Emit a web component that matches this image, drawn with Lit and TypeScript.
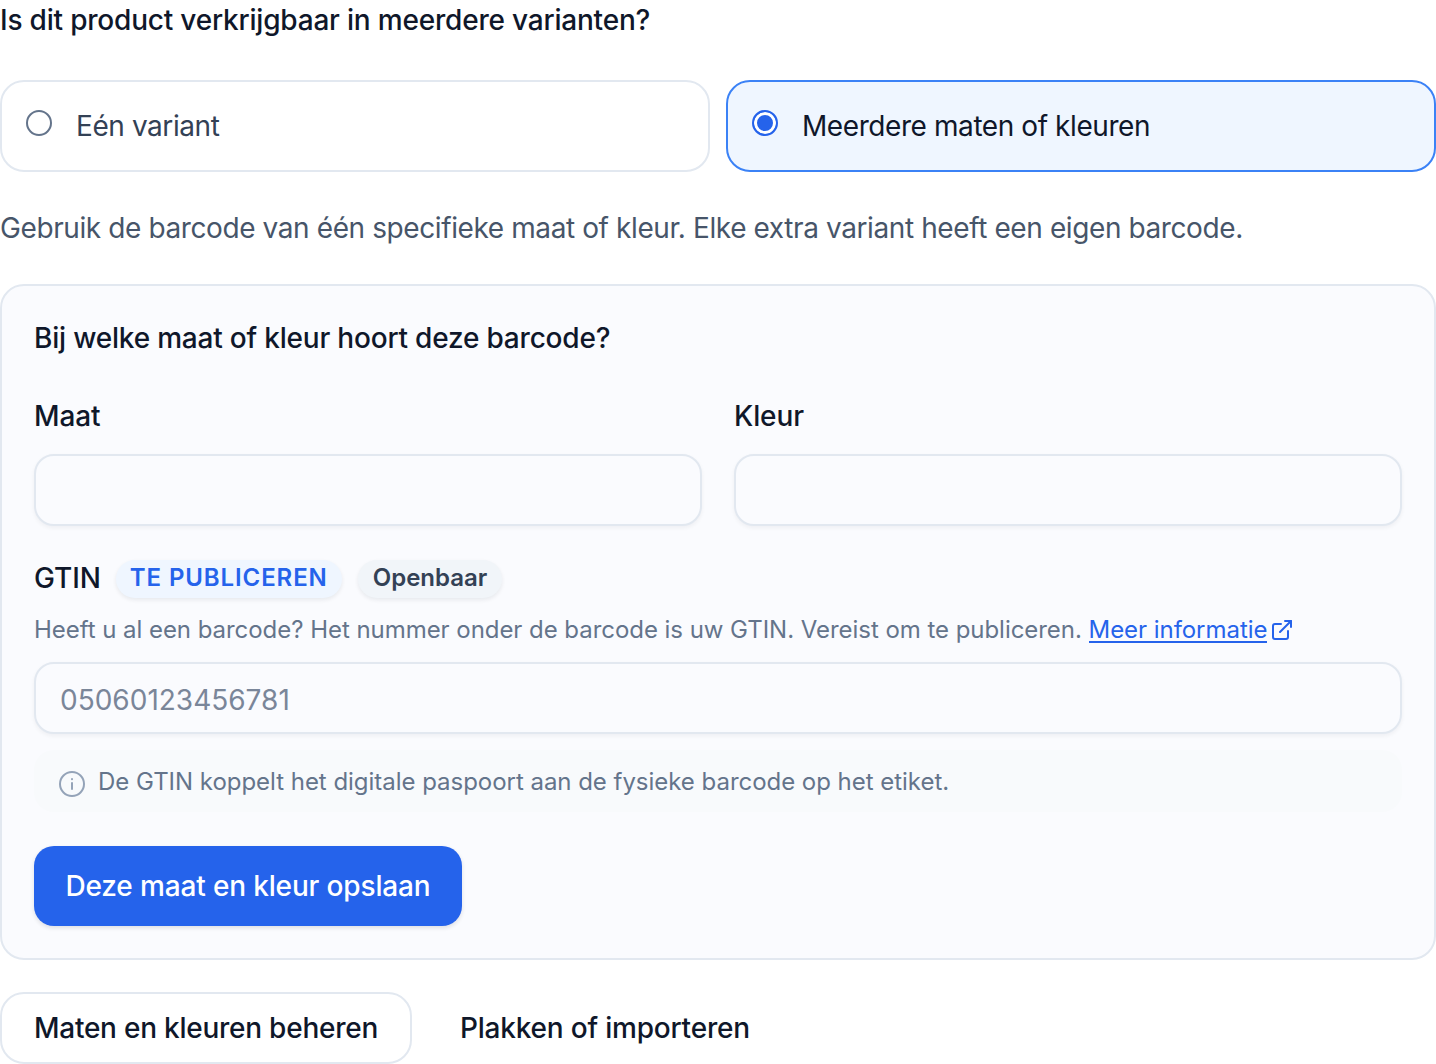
import { LitElement, html, css } from "lit";
import { customElement } from "lit/decorators.js";

@customElement("app-root")
export class AppRoot extends LitElement {
  static styles = css`
    :host { display: block; width: 1436px; height: 1064px; overflow: hidden; background: #fff; font-family: Inter, "Liberation Sans", sans-serif; color: #0f172a; font-size: 28px; line-height: 40px; }
    * { box-sizing: border-box; }
    .q { margin: 0; height: 40px; font-weight: 500; font-size: 28px; letter-spacing: -0.2px; }
    .options { display: grid; grid-template-columns: 1fr 1fr; gap: 16px; margin-top: 40px; }
    .opt { height: 92px; border: 2px solid #e2e8f0; border-radius: 24px; background: #fff; display: flex; padding: 24px 24px 0; gap: 24px; color: #334155; letter-spacing: -0.42px; }
    .opt.on { border-color: #3b82f6; background: #eff6ff; color: #0f172a; }
    .radio { flex: none; width: 26px; height: 26px; margin-top: 4px; border-radius: 50%; border: 2px solid #64748b; background: #fff; }
    .on .radio { border: 2px solid #2563eb; background: #2563eb; box-shadow: inset 0 0 0 3px #fff; }
    .desc { margin: 36px 0 0; color: #475569; height: 40px; letter-spacing: -0.4px; }
    .panel { margin-top: 36px; height: 676px; border: 2px solid #e2e8f0; border-radius: 24px; background: #fafbfe; padding: 32px; }
    .ptitle { font-weight: 500; height: 40px; margin: 0; letter-spacing: -0.2px; }
    .cols { display: grid; grid-template-columns: 1fr 1fr; gap: 32px; margin-top: 38px; }
    .label { font-weight: 500; height: 40px; letter-spacing: -0.1px; }
    .input { height: 72px; border: 2px solid #e2e8f0; border-radius: 20px; background: #fafbfe; box-shadow: 0 2px 4px rgba(15,23,42,.05); margin-top: 18px; }
    .gtin { display: flex; align-items: center; gap: 14px; height: 40px; margin-top: 32px; }
    .badge { font-size: 24px; font-weight: 600; line-height: 35px; height: 38px; margin-top: 2px; border-radius: 19px; box-shadow: 0 2px 4px rgba(15,23,42,.08); }
    .badge.blue { background: #eff6ff; color: #2563eb; letter-spacing: 0.9px; margin-left: 1px; padding: 0 14px; }
    .badge.gray { background: #f1f5f9; color: #334155; padding: 0 15px; margin-left: 2px; }
    .help { font-size: 24px; line-height: 32px; height: 32px; margin-top: 16px; color: #64748b; display: flex; align-items: flex-start; white-space: pre; letter-spacing: -0.045px; }
    .help a { color: #2563eb; text-decoration: none; border-bottom: 2px solid #2563eb; height: 29px; }
    .help svg { margin: 6px 0 0 5px; }
    .gtininput { margin-top: 16px; padding: 4px 24px 0; color: #7a8699; display: flex; align-items: center; }
    .info { display: flex; align-items: center; gap: 13px; height: 62px; margin-top: 16px; border-radius: 20px; background: #f8fafc; padding: 2px 25px 0; font-size: 24px; color: #64748b; letter-spacing: -0.03px; }
    .info svg { margin-top: 4px; }
    .save { display: block; margin-top: 34px; width: 428px; height: 80px; border: 0; border-radius: 20px; background: #2563eb; color: #fff; font: 500 28px Inter, "Liberation Sans", sans-serif; letter-spacing: -0.15px; box-shadow: 0 2px 4px rgba(15,23,42,.12); padding: 0; }
    .actions { display: flex; align-items: center; margin-top: 32px; gap: 48px; }
    .btn { height: 72px; width: 412px; border: 2px solid #e2e8f0; border-radius: 24px; background: #fff; font-weight: 500; display: flex; align-items: center; justify-content: center; letter-spacing: -0.24px; }
    .link { font-weight: 500; letter-spacing: -0.2px; }
  `;

  render() {
    return html`
      <p class="q">Is dit product verkrijgbaar in meerdere varianten?</p>
      <div class="options">
        <div class="opt"><div class="radio"></div><span>Eén variant</span></div>
        <div class="opt on"><div class="radio"></div><span>Meerdere maten of kleuren</span></div>
      </div>
      <p class="desc">Gebruik de barcode van één specifieke maat of kleur. Elke extra variant heeft een eigen barcode.</p>
      <div class="panel">
        <p class="ptitle">Bij welke maat of kleur hoort deze barcode?</p>
        <div class="cols">
          <div><div class="label">Maat</div><div class="input"></div></div>
          <div><div class="label">Kleur</div><div class="input"></div></div>
        </div>
        <div class="gtin">
          <span class="label">GTIN</span>
          <span class="badge blue">TE PUBLICEREN</span>
          <span class="badge gray">Openbaar</span>
        </div>
        <div class="help">Heeft u al een barcode? Het nummer onder de barcode is uw GTIN. Vereist om te publiceren. <a>Meer informatie</a><svg width="20" height="20" viewBox="0 0 20 20" fill="none" stroke="#2563eb" stroke-width="2" stroke-linecap="round" stroke-linejoin="round"><path d="M9 4H3a2 2 0 0 0-2 2v11a2 2 0 0 0 2 2h11a2 2 0 0 0 2-2v-6"/><path d="M13 1h6v6"/><path d="M19 1 8 12"/></svg></div>
        <div class="input gtininput">05060123456781</div>
        <div class="info">
          <svg width="26" height="26" viewBox="0 0 26 26" fill="none" stroke="#94a3b8" stroke-width="2" stroke-linecap="round"><circle cx="13" cy="13" r="12"/><path d="M13 12v6"/><path d="M13 8v.2"/></svg>
          <span>De GTIN koppelt het digitale paspoort aan de fysieke barcode op het etiket.</span>
        </div>
        <button class="save">Deze maat en kleur opslaan</button>
      </div>
      <div class="actions">
        <div class="btn">Maten en kleuren beheren</div>
        <div class="link">Plakken of importeren</div>
      </div>
    `;
  }
}
